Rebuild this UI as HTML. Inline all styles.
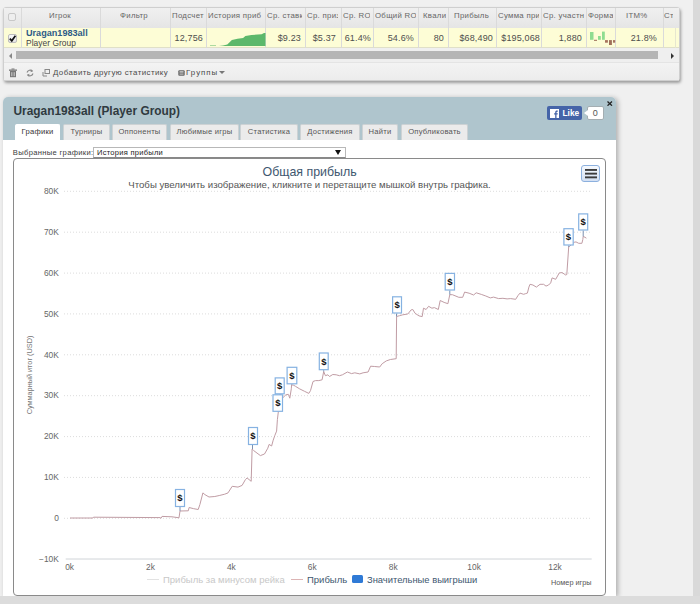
<!DOCTYPE html>
<html><head><meta charset="utf-8">
<style>
*{box-sizing:border-box;margin:0;padding:0}
html,body{width:700px;height:604px;overflow:hidden;background:#f0f0f0;font-family:"Liberation Sans",sans-serif;position:relative}
.abs{position:absolute}
#rstrip{left:693px;top:0;width:7px;height:604px;background:#d9d9d9}
#bstrip{left:0;top:596px;width:700px;height:8px;background:#dcdcdc}
#grid{left:3px;top:7px;width:677px;height:74px;background:#f3f3f3;border:1px solid #cfcfcf;border-radius:3px;box-shadow:1px 2px 3px rgba(0,0,0,.35)}
#ghead{left:4px;top:8px;width:675px;height:20px;background:linear-gradient(#f0f0f0,#e5e5e5)}
#grow{left:4px;top:28px;width:675px;height:20px;background:#fdfdd6;border-bottom:1px solid #e0e0c8}
#gscroll{left:4px;top:48px;width:675px;height:14.5px;background:#efefef;border-bottom:1px solid #e4e4e4}
#gfoot{left:4px;top:62.5px;width:675px;height:18.5px;background:linear-gradient(#f3f3f3,#ececec);border-bottom:1px solid #cfcfcf}
.vb{top:8px;width:1px;height:40px;background:#dadada}
.ht{font-size:7.8px;letter-spacing:.3px;color:#666;white-space:nowrap;overflow:hidden;top:11.2px;line-height:10px}
.dt{font-size:9px;color:#4d4d4d;white-space:nowrap;top:33px;line-height:10px;letter-spacing:.15px}
#panel{left:3px;top:97px;width:613px;height:499px;background:#fff;border-radius:5px 5px 0 0;box-shadow:2px 1px 5px rgba(0,0,0,.28)}
#phead{left:3px;top:97px;width:613px;height:43px;background:#afc5cd;border-radius:5px 5px 0 0}
.tab{top:124px;height:16px;background:#ebebeb;border:1px solid #cdd2d4;border-bottom:none;border-radius:2px 2px 0 0;font-size:7.6px;letter-spacing:.25px;color:#555;text-align:center;line-height:14.6px;white-space:nowrap}
.tab.act{background:#fff;border-color:#fff;color:#333}
.yl{left:20px;width:38.8px;text-align:right;font-size:8.4px;color:#666;line-height:10px}
.xl{width:30px;text-align:center;top:562px;font-size:8.4px;color:#666;line-height:10px}

</style></head><body>
<div class="abs" id="rstrip"></div>
<!-- GRID -->
<div class="abs" id="grid"></div>
<div class="abs" id="ghead"></div>
<div class="abs" id="grow"></div>
<div class="abs" id="gscroll"></div>
<div class="abs" id="gfoot"></div>
<!-- column borders -->
<div class="abs vb" style="left:21px"></div>
<div class="abs vb" style="left:100px"></div>
<div class="abs vb" style="left:170px"></div>
<div class="abs vb" style="left:206px"></div>
<div class="abs vb" style="left:265px"></div>
<div class="abs vb" style="left:305px"></div>
<div class="abs vb" style="left:341px"></div>
<div class="abs vb" style="left:373px"></div>
<div class="abs vb" style="left:418px"></div>
<div class="abs vb" style="left:448px"></div>
<div class="abs vb" style="left:496px"></div>
<div class="abs vb" style="left:541px"></div>
<div class="abs vb" style="left:586px"></div>
<div class="abs vb" style="left:615px"></div>
<div class="abs vb" style="left:663px"></div>
<div class="abs vb" style="left:675px;top:28px;height:20px;background:#e6e6d0"></div>
<!-- header checkbox -->
<div class="abs" style="left:8px;top:13px;width:8px;height:8px;border:1px solid #c8c8c8;border-radius:2px;background:#eee"></div>
<!-- header texts -->
<div class="abs ht" style="left:49px;width:30px">Игрок</div>
<div class="abs ht" style="left:120px;width:40px">Фильтр</div>
<div class="abs ht" style="left:172px;width:34px">Подсчет</div>
<div class="abs ht" style="left:208px;width:56px">История приб</div>
<div class="abs ht" style="left:267px;width:35px">Ср. ставки</div>
<div class="abs ht" style="left:307px;width:30.5px">Ср. приз</div>
<div class="abs ht" style="left:343px;width:27px">Ср. ROI</div>
<div class="abs ht" style="left:375px;width:40.5px">Общий ROI</div>
<div class="abs ht" style="left:423px;width:23px">Квалиф</div>
<div class="abs ht" style="left:454px;width:40px">Прибыль</div>
<div class="abs ht" style="left:498px;width:41px">Сумма призов</div>
<div class="abs ht" style="left:543px;width:41px">Ср. участников</div>
<div class="abs ht" style="left:588px;width:25px">Форма</div>
<div class="abs ht" style="left:626px;width:30px">ITM%</div>
<div class="abs ht" style="left:664px;width:9px">Ст</div>
<!-- row -->
<div class="abs" style="left:8px;top:34px;width:9px;height:9px;border:1px solid #bdbdbd;border-radius:2px;background:linear-gradient(#fafafa,#e4e4e4)"></div>
<svg class="abs" style="left:8px;top:34px" width="9" height="9" viewBox="0 0 9 9"><path d="M1.8 4.6l2 2.2 3.6-5" fill="none" stroke="#111" stroke-width="1.7"/></svg>
<div class="abs" style="left:26px;top:28px;font-size:9.1px;font-weight:bold;color:#2d5a86;line-height:10px;white-space:nowrap">Uragan1983all</div>
<div class="abs" style="left:26px;top:38px;font-size:8.4px;color:#444;line-height:10px;white-space:nowrap;letter-spacing:.05px">Player Group</div>
<div class="abs dt" style="right:497px">12,756</div>
<svg class="abs" style="left:206px;top:28px" width="60" height="20" viewBox="206 28 60 20">
<path d="M210 45.6 L216 45.6 L216 46 L210 46Z M219 46 L223 45.6 L227.3 44.5 L231.9 39.9 L237.5 38.7 L243.1 38 L245.4 36.1 L251.4 35 L261.6 34.3 L264 32.9 L265.5 32.9 L265.5 46 Z" fill="#5cb86b"/>
</svg>
<div class="abs dt" style="right:399px">$9.23</div>
<div class="abs dt" style="right:364px">$5.37</div>
<div class="abs dt" style="right:329px">61.4%</div>
<div class="abs dt" style="right:286px">54.6%</div>
<div class="abs dt" style="right:256px">80</div>
<div class="abs dt" style="right:207px">$68,490</div>
<div class="abs dt" style="right:160px">$195,068</div>
<div class="abs dt" style="right:118px">1,880</div>
<svg class="abs" style="left:586px;top:28px" width="30" height="20" viewBox="586 28 30 20">
<rect x="590" y="32" width="3.5" height="7.8" fill="#8edc90"/>
<rect x="594" y="39.8" width="3" height="1" fill="#9a6a55"/>
<rect x="598" y="36" width="2.8" height="3.8" fill="#8edc90"/>
<rect x="602" y="31.6" width="2.8" height="8.2" fill="#8edc90"/>
<rect x="605" y="40.1" width="2.9" height="2.6" fill="#a7735e"/>
<rect x="609" y="40.1" width="2.9" height="4.9" fill="#a0705a"/>
<rect x="613" y="40.1" width="2.2" height="2.6" fill="#a7735e"/>
</svg>
<div class="abs dt" style="right:43px">21.8%</div>
<!-- scrollbar -->
<div class="abs" style="left:8.5px;top:52.5px;width:0;height:0;border-right:3px solid #888;border-top:3px solid transparent;border-bottom:3px solid transparent"></div>
<div class="abs" style="left:16px;top:51px;width:642px;height:8.4px;background:#b5b5b5"></div>
<div class="abs" style="left:671px;top:52.5px;width:0;height:0;border-left:3.2px solid #333;border-top:3px solid transparent;border-bottom:3px solid transparent"></div>
<!-- footer -->
<svg class="abs" style="left:8px;top:68px" width="10" height="10" viewBox="0 0 10 10"><path d="M2 3h6v6.2H2z" fill="#777"/><rect x="1" y="1.5" width="8" height="1.3" fill="#777"/><rect x="3.5" y=".5" width="3" height="1" fill="#777"/><path d="M3.5 4.2v4M5 4.2v4M6.5 4.2v4" stroke="#ddd" stroke-width=".6"/></svg>
<svg class="abs" style="left:25px;top:68px" width="10" height="10" viewBox="0 0 10 10"><path d="M7.5 3.2A3.2 3.2 0 0 0 2 4.5M2.5 6.8A3.2 3.2 0 0 0 8 5.5" fill="none" stroke="#888" stroke-width="1.1"/><path d="M6 1.5l2 1.8-2.4.9zM4 8.5l-2-1.8 2.4-.9z" fill="#888"/></svg>
<svg class="abs" style="left:42px;top:69px" width="8" height="8" viewBox="0 0 8 8"><rect x="3" y=".5" width="4.5" height="4" fill="none" stroke="#888" stroke-width="1"/><path d="M1 3v4h4" fill="none" stroke="#888" stroke-width="1"/></svg>
<div class="abs" style="left:53px;top:68px;font-size:7.9px;letter-spacing:.43px;color:#4a4a4a;line-height:10px;white-space:nowrap">Добавить другую статистику</div>
<svg class="abs" style="left:178px;top:70px" width="7" height="6" viewBox="0 0 7 6"><rect x=".3" y=".3" width="6.4" height="5.4" rx="1" fill="#666"/><rect x="1.5" y="1.3" width="4" height="1.2" fill="#ddd"/><rect x="1.5" y="3.5" width="4" height="1.2" fill="#bbb"/></svg>
<div class="abs" style="left:186px;top:68px;font-size:7.9px;letter-spacing:1px;color:#4a4a4a;line-height:10px;white-space:nowrap">Группы</div>
<div class="abs" style="left:219px;top:71px;width:0;height:0;border-top:3.5px solid #777;border-left:3px solid transparent;border-right:3px solid transparent"></div>

<!-- PANEL -->
<div class="abs" id="panel"></div>
<div class="abs" id="phead"></div>
<div class="abs" style="left:13.5px;top:105px;font-size:11.9px;font-weight:bold;color:#2f3a40;line-height:12px;white-space:nowrap">Uragan1983all (Player Group)</div>
<div class="abs tab act" style="left:15px;width:45px">Графики</div>
<div class="abs tab" style="left:63px;width:47px">Турниры</div>
<div class="abs tab" style="left:112px;width:55px">Оппоненты</div>
<div class="abs tab" style="left:170px;width:69px">Любимые игры</div>
<div class="abs tab" style="left:240px;width:58px">Статистика</div>
<div class="abs tab" style="left:300px;width:60px">Достижения</div>
<div class="abs tab" style="left:362px;width:36px">Найти</div>
<div class="abs tab" style="left:401px;width:67px">Опубликовать</div>
<!-- fb like -->
<div class="abs" style="left:547px;top:106px;width:35px;height:14px;background:#4564a8;border-radius:2px"></div>
<svg class="abs" style="left:550px;top:109px" width="9" height="9" viewBox="0 0 9 9"><rect width="9" height="9" fill="#fff"/><path d="M5.2 9V5.6H4.1V4.3h1.1V3.3c0-1.1.7-1.7 1.7-1.7h.9v1.2h-.6c-.5 0-.7.2-.7.6v.9h1.3l-.2 1.3H6.5V9z" fill="#4564a8"/></svg>
<div class="abs" style="left:562.5px;top:108px;font-size:8.4px;font-weight:bold;color:#fff;line-height:10px">Like</div>
<div class="abs" style="left:587px;top:106px;width:16.5px;height:14px;background:#fff;border:1px solid #a4aeb2;border-radius:2px;font-size:9px;color:#555;text-align:center;line-height:12.5px">0</div>
<div class="abs" style="left:584px;top:110px;width:0;height:0;border-right:4px solid #fff;border-top:3px solid transparent;border-bottom:3px solid transparent"></div>
<svg class="abs" style="left:607.4px;top:100.6px" width="5.5" height="5.2" viewBox="0 0 5.5 5.2"><path d="M.5.5l4.5 4.2M5 .5L.5 4.7" stroke="#222" stroke-width="1.3"/></svg>
<!-- selector -->
<div class="abs" style="left:12.8px;top:148px;font-size:7.6px;letter-spacing:.32px;color:#3a3a3a;line-height:9px;white-space:nowrap">Выбранные графики:</div>
<div class="abs" style="left:93px;top:147px;width:253px;height:11px;border:1px solid #b8b8b8;border-bottom-color:#888;background:#fff"></div>
<div class="abs" style="left:97px;top:148px;font-size:7.5px;letter-spacing:.28px;color:#222;line-height:9px;white-space:nowrap">История прибыли</div>
<div class="abs" style="left:335px;top:150px;width:0;height:0;border-top:5px solid #111;border-left:3.5px solid transparent;border-right:3.5px solid transparent"></div>
<!-- chart box -->
<div class="abs" style="left:13px;top:158px;width:593px;height:438px;border:1px solid #8a8a8a;border-radius:4px"></div>
<div class="abs" style="left:262.5px;top:166px;font-size:12.4px;color:#3e576f;line-height:13px;white-space:nowrap">Общая прибыль</div>
<div class="abs" style="left:128.3px;top:179.7px;font-size:9.65px;color:#555;line-height:10px;white-space:nowrap">Чтобы увеличить изображение, кликните и перетащите мышкой внутрь графика.</div>
<!-- menu btn -->
<div class="abs" style="left:581px;top:165px;width:19px;height:17px;border:1px solid #8cb0de;border-radius:3px;background:linear-gradient(#f6f9fd,#d3e0f3)"></div>
<svg class="abs" style="left:584px;top:168px" width="14" height="12" viewBox="0 0 14 12"><rect x="1" y="1" width="12" height="1.9" fill="#3c3c3c"/><rect x="1" y="4.7" width="12" height="1.9" fill="#3c3c3c"/><rect x="1" y="8.4" width="12" height="1.9" fill="#3c3c3c"/></svg>
<!-- y labels -->
<div class="abs yl" style="top:186px">80K</div>
<div class="abs yl" style="top:227px">70K</div>
<div class="abs yl" style="top:268px">60K</div>
<div class="abs yl" style="top:309px">50K</div>
<div class="abs yl" style="top:350px">40K</div>
<div class="abs yl" style="top:390px">30K</div>
<div class="abs yl" style="top:431px">20K</div>
<div class="abs yl" style="top:472px">10K</div>
<div class="abs yl" style="top:513px">0</div>
<div class="abs yl" style="top:554px">&minus;10K</div>
<!-- x labels -->
<div class="abs xl" style="left:54.6px">0k</div>
<div class="abs xl" style="left:135.5px">2k</div>
<div class="abs xl" style="left:216.4px">4k</div>
<div class="abs xl" style="left:297.3px">6k</div>
<div class="abs xl" style="left:378.2px">8k</div>
<div class="abs xl" style="left:459.1px">10k</div>
<div class="abs xl" style="left:540px">12k</div>
<div class="abs" style="left:-10.5px;top:371px;width:80px;text-align:center;font-size:7.3px;color:#777;line-height:8px;white-space:nowrap;transform:rotate(-90deg)">Суммарный итог (USD)</div>
<div class="abs" style="left:551px;top:578px;font-size:7.3px;color:#555;line-height:9px;white-space:nowrap">Номер игры</div>
<!-- legend -->
<div class="abs" style="left:147px;top:578.7px;width:11.5px;height:1.8px;background:#e2e2e2"></div>
<div class="abs" style="left:163px;top:575px;font-size:9.5px;color:#c8c8c8;line-height:10px;white-space:nowrap">Прибыль за минусом рейка</div>
<div class="abs" style="left:291px;top:578.7px;width:11.5px;height:1.8px;background:#dcb4b4"></div>
<div class="abs" style="left:307px;top:575px;font-size:9.5px;color:#3e576f;line-height:10px;white-space:nowrap">Прибыль</div>
<div class="abs" style="left:351.6px;top:575.2px;width:11.5px;height:8.3px;background:#2f7ad6;border-radius:1.5px"></div>
<div class="abs" style="left:367px;top:575px;font-size:9.4px;color:#3e576f;line-height:10px;white-space:nowrap">Значительные выигрыши</div>

<svg class="abs" style="left:0;top:0" width="700" height="604" viewBox="0 0 700 604">
<line x1="64" y1="518.3" x2="592" y2="518.3" stroke="#dcdcdc" stroke-width="1" stroke-dasharray="1 2"/>
<line x1="64" y1="477.4" x2="592" y2="477.4" stroke="#dcdcdc" stroke-width="1" stroke-dasharray="1 2"/>
<line x1="64" y1="436.6" x2="592" y2="436.6" stroke="#dcdcdc" stroke-width="1" stroke-dasharray="1 2"/>
<line x1="64" y1="395.7" x2="592" y2="395.7" stroke="#dcdcdc" stroke-width="1" stroke-dasharray="1 2"/>
<line x1="64" y1="354.8" x2="592" y2="354.8" stroke="#dcdcdc" stroke-width="1" stroke-dasharray="1 2"/>
<line x1="64" y1="313.9" x2="592" y2="313.9" stroke="#dcdcdc" stroke-width="1" stroke-dasharray="1 2"/>
<line x1="64" y1="273.1" x2="592" y2="273.1" stroke="#dcdcdc" stroke-width="1" stroke-dasharray="1 2"/>
<line x1="64" y1="232.2" x2="592" y2="232.2" stroke="#dcdcdc" stroke-width="1" stroke-dasharray="1 2"/>
<line x1="64" y1="191.3" x2="592" y2="191.3" stroke="#dcdcdc" stroke-width="1" stroke-dasharray="1 2"/>
<line x1="65.7" y1="559" x2="591.7" y2="559" stroke="#d0d4d8" stroke-width="1"/>
<path d="M70 518 L93 518 L93.5 517.2 L160 517.6 L161 518.3 L162 516.4 L172 516.8 L179 517.8 L180 511 L188.3 510.8 L189.1 507.5 L193.3 508.6 L198.2 509.5 L199.9 504.5 L202.9 492.9 L204.9 494.6 L209 497 L214.8 496.5 L219.8 495.4 L224.7 494.2 L228 492.9 L232.2 486.3 L238 487.1 L242.1 485.4 L245.4 479.6 L247.1 478 L251.2 481.3 L252.1 449 L253.7 450.6 L260.4 455.6 L264.5 454 L267.8 448.2 L269.1 444.4 L271.6 446 L273.2 440.2 L274.9 435.3 L276.6 431.1 L277.4 419.6 L278.3 412 L280 400 L282.9 397.7 L285.9 394.8 L288.3 394.3 L289.8 398.2 L291.3 388.8 L291.6 384.8 L293.8 385.3 L295.6 386.4 L299.7 388.9 L304.7 391.4 L308.8 393.4 L310.5 390.6 L313 381.5 L315.5 380.6 L318.8 380.6 L322.1 379.8 L323.7 371.5 L325.4 375.7 L327.9 374.8 L329.5 376.5 L332.8 374.5 L336.2 374.8 L339.5 375.7 L342.4 374.8 L347.4 372 L351.5 373.6 L354.8 372.8 L359.8 373.9 L363.1 372.8 L368.1 372 L370.6 366.2 L374.7 366.5 L379.7 367 L382.2 363.7 L386.3 360.9 L390.4 359.5 L396.2 358.7 L396.6 316.5 L399.5 315.7 L402.8 314.8 L407.8 314 L411.1 309.9 L412.8 309.5 L415.1 313.3 L419 315.9 L422.2 316.6 L423.5 308.2 L426.1 309.5 L428.6 306.3 L431.9 308.2 L434.4 307.6 L438.3 309.5 L440.2 300.5 L444.1 302.4 L447.9 303.7 L449.8 294.7 L452.4 294.7 L458.8 297.3 L462.7 297.3 L464.6 292.1 L469.1 293.2 L473.6 295 L476.2 292.8 L481.3 294.4 L485.8 296 L490.3 297.9 L493.6 297.1 L498.6 298.6 L502.9 298.3 L507.1 298.9 L510.7 298.6 L515.7 299.3 L517.9 295.7 L520 293.1 L523.6 294.3 L525.7 293.6 L527.4 293.1 L528.9 287.1 L530 284.3 L532.9 285 L536.4 287.1 L540 284.3 L543.6 284.3 L546 286.1 L548.6 285 L550.7 282.9 L552.1 277.9 L555.7 279.3 L559.3 272.9 L562.1 272.6 L565.7 275 L566.8 274.5 L567.8 260 L568.7 247 L574.1 242.3 L576 241.9 L578.7 243.3 L581.9 243.3 L582.8 239.6 L583.2 236.4 L585 237.3 L586.4 238.2" fill="none" stroke="#c09ca4" stroke-width="1"/>
<line x1="180" y1="507" x2="180" y2="511" stroke="#7a90b0" stroke-width="1"/>
<line x1="252.5" y1="445" x2="252.5" y2="449" stroke="#7a90b0" stroke-width="1"/>
<line x1="278" y1="411.8" x2="278" y2="412" stroke="#7a90b0" stroke-width="1"/>
<line x1="280" y1="394.3" x2="280" y2="400" stroke="#7a90b0" stroke-width="1"/>
<line x1="291.6" y1="384.3" x2="291.6" y2="384.8" stroke="#7a90b0" stroke-width="1"/>
<line x1="323.7" y1="370.2" x2="323.7" y2="371.5" stroke="#7a90b0" stroke-width="1"/>
<line x1="396.5" y1="313.5" x2="396.5" y2="316.5" stroke="#7a90b0" stroke-width="1"/>
<line x1="449.8" y1="290.5" x2="449.8" y2="294.7" stroke="#7a90b0" stroke-width="1"/>
<line x1="568.7" y1="245.5" x2="568.7" y2="247" stroke="#7a90b0" stroke-width="1"/>
<line x1="583.2" y1="230.5" x2="583.2" y2="236.4" stroke="#7a90b0" stroke-width="1"/>
<rect x="175.5" y="489.5" width="9.0" height="17.0" fill="#fff" stroke="#86b2e2" stroke-width="1.2"/>
<text x="180.0" y="501.3" font-size="9.5" font-weight="bold" text-anchor="middle" fill="#111" font-family="Liberation Sans">$</text>
<rect x="248.5" y="427.5" width="9.0" height="17.0" fill="#fff" stroke="#86b2e2" stroke-width="1.2"/>
<text x="253.0" y="439.3" font-size="9.5" font-weight="bold" text-anchor="middle" fill="#111" font-family="Liberation Sans">$</text>
<rect x="273.0" y="394.8" width="9.5" height="16.5" fill="#fff" stroke="#86b2e2" stroke-width="1.2"/>
<text x="277.8" y="406.4" font-size="9.5" font-weight="bold" text-anchor="middle" fill="#111" font-family="Liberation Sans">$</text>
<rect x="275.2" y="377.9" width="9.0" height="15.9" fill="#fff" stroke="#86b2e2" stroke-width="1.2"/>
<text x="279.7" y="389.2" font-size="9.5" font-weight="bold" text-anchor="middle" fill="#111" font-family="Liberation Sans">$</text>
<rect x="287.1" y="367.3" width="9.7" height="16.5" fill="#fff" stroke="#86b2e2" stroke-width="1.2"/>
<text x="292.0" y="378.9" font-size="9.5" font-weight="bold" text-anchor="middle" fill="#111" font-family="Liberation Sans">$</text>
<rect x="319.3" y="353.0" width="8.9" height="16.7" fill="#fff" stroke="#86b2e2" stroke-width="1.2"/>
<text x="323.8" y="364.7" font-size="9.5" font-weight="bold" text-anchor="middle" fill="#111" font-family="Liberation Sans">$</text>
<rect x="392.6" y="296.8" width="8.9" height="16.2" fill="#fff" stroke="#86b2e2" stroke-width="1.2"/>
<text x="397.1" y="308.2" font-size="9.5" font-weight="bold" text-anchor="middle" fill="#111" font-family="Liberation Sans">$</text>
<rect x="445.2" y="273.4" width="9.3" height="16.6" fill="#fff" stroke="#86b2e2" stroke-width="1.2"/>
<text x="449.9" y="285.0" font-size="9.5" font-weight="bold" text-anchor="middle" fill="#111" font-family="Liberation Sans">$</text>
<rect x="563.9" y="228.7" width="9.3" height="16.3" fill="#fff" stroke="#86b2e2" stroke-width="1.2"/>
<text x="568.5" y="240.2" font-size="9.5" font-weight="bold" text-anchor="middle" fill="#111" font-family="Liberation Sans">$</text>
<rect x="578.7" y="213.9" width="9.0" height="16.1" fill="#fff" stroke="#86b2e2" stroke-width="1.2"/>
<text x="583.2" y="225.2" font-size="9.5" font-weight="bold" text-anchor="middle" fill="#111" font-family="Liberation Sans">$</text>
</svg>
<div class="abs" id="bstrip"></div>
</body></html>
